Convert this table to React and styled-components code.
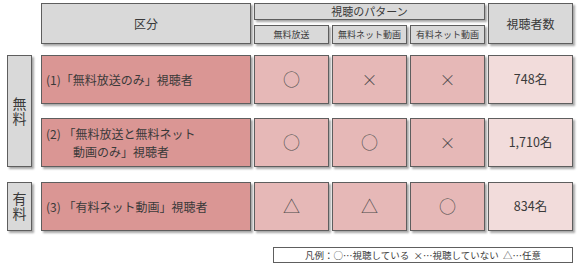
import React from "react";
import styled, { createGlobalStyle, css } from "styled-components";

const Global = createGlobalStyle`
  html, body {
    margin: 0;
    padding: 0;
    background: #ffffff;
  }
  body {
    font-family: "Noto Sans CJK JP", "Noto Sans", sans-serif;
    color: #3a3a3a;
  }
`;

const tones = {
  gray: "#d9d9d9",
  rose: "#da9694",
  blush: "#e6b8b7",
  pale: "#f2dcdb",
};

const Page = styled.div`
  width: 580px;
  height: 267px;
  box-sizing: border-box;
  padding: 3px 0 0 7px;
  overflow: hidden;
`;

const Cell = styled.div`
  box-sizing: border-box;
  border: 1px solid #5e5e5e;
  background: ${(p) => tones[p.$tone || "gray"]};
  box-shadow: 2px 2px 2px rgba(0, 0, 0, 0.35);
  display: flex;
  align-items: center;
  justify-content: ${(p) => (p.$left ? "flex-start" : "center")};
  font-size: ${(p) => p.$size || 13}px;
  line-height: 1.3;
  color: #3a3a3a;
  white-space: nowrap;
`;

const HeaderGrid = styled.div`
  display: grid;
  grid-template-columns: 31px 210px 75px 75px 75px 85px;
  grid-template-rows: 17px 19px;
  column-gap: 3px;
  row-gap: 5px;
`;

const HeaderCell = styled(Cell)`
  grid-column: ${(p) => p.$col};
  grid-row: ${(p) => p.$row};
`;

const Group = styled.div`
  display: flex;
  margin-top: ${(p) => p.$gap}px;
`;

const SideLabel = styled(Cell)`
  width: 25px;
  margin-right: 9px;
`;

/* stacked two-character label (無料 / 有料) */
const SideText = styled.span`
  writing-mode: vertical-rl;
  font-size: 14px;
  line-height: 1;
  letter-spacing: 1px;
  padding-top: 1px;
`;

const Rows = styled.div`
  display: flex;
  flex-direction: column;
  gap: 14px;
`;

const Row = styled.div`
  display: grid;
  grid-template-columns: 210px 75px 75px 75px 85px;
  column-gap: 3px;
  height: 49px;
`;

const Title = styled.div`
  padding-left: 4px;
  font-size: 12px;
  line-height: 18px;
`;

const Indent = styled.span`
  display: block;
  padding-left: 27px;
`;

const Mark = styled.span`
  font-family: "Noto Sans CJK JP", sans-serif;
  font-weight: 300;
  color: #4a4a4a;
  ${(p) =>
    p.$kind === "circle" &&
    css`
      font-size: 17px;
    `}
  ${(p) =>
    p.$kind === "cross" &&
    css`
      font-size: 16px;
    `}
  ${(p) =>
    p.$kind === "tri" &&
    css`
      font-size: 17px;
    `}
`;

const Legend = styled.div`
  margin: 16px 0 0 266px;
  width: 300px;
  height: 16px;
  box-sizing: border-box;
  border: 1px solid #5e5e5e;
  background: #fff;
  display: flex;
  align-items: center;
  justify-content: center;
  font-size: 9.5px;
  color: #3a3a3a;
  white-space: pre;
`;

const glyph = { o: "○", x: "×", t: "△" };
const kind = { o: "circle", x: "cross", t: "tri" };

function DataRow({ title, marks, count }) {
  return (
    <Row>
      <Cell $tone="rose" $left>
        <Title>{title}</Title>
      </Cell>
      {marks.map((m, i) => (
        <Cell key={i} $tone="blush">
          <Mark $kind={kind[m]}>{glyph[m]}</Mark>
        </Cell>
      ))}
      <Cell $tone="pale" $size={12.5}>
        {count}
      </Cell>
    </Row>
  );
}

export default function App() {
  return (
    <>
      <Global />
      <Page>
        <HeaderGrid>
          <HeaderCell $col="2" $row="1 / span 2" $size={12}>
            区分
          </HeaderCell>
          <HeaderCell $col="3 / span 3" $row="1" $size={11}>
            視聴のパターン
          </HeaderCell>
          <HeaderCell $col="3" $row="2" $size={9}>
            無料放送
          </HeaderCell>
          <HeaderCell $col="4" $row="2" $size={9}>
            無料ネット動画
          </HeaderCell>
          <HeaderCell $col="5" $row="2" $size={9}>
            有料ネット動画
          </HeaderCell>
          <HeaderCell $col="6" $row="1 / span 2" $size={12}>
            視聴者数
          </HeaderCell>
        </HeaderGrid>

        <Group $gap={11}>
          <SideLabel>
            <SideText>無料</SideText>
          </SideLabel>
          <Rows>
            <DataRow
              title="(1)「無料放送のみ」視聴者"
              marks={["o", "x", "x"]}
              count="748名"
            />
            <DataRow
              title={
                <>
                  (2) 「無料放送と無料ネット
                  <Indent>動画のみ」視聴者</Indent>
                </>
              }
              marks={["o", "o", "x"]}
              count="1,710名"
            />
          </Rows>
        </Group>

        <Group $gap={15}>
          <SideLabel>
            <SideText>有料</SideText>
          </SideLabel>
          <Rows>
            <DataRow
              title="(3) 「有料ネット動画」視聴者"
              marks={["t", "t", "o"]}
              count="834名"
            />
          </Rows>
        </Group>

        <Legend>凡例：○…視聴している  ×…視聴していない  △…任意</Legend>
      </Page>
    </>
  );
}
